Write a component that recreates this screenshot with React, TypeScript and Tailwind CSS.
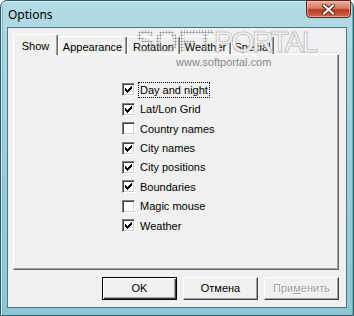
import React from "react";

const font = { fontFamily: '"Liberation Sans", Arial, sans-serif' };

const items = [
  { label: "Day and night", checked: true, focus: true },
  { label: "Lat/Lon Grid", checked: true },
  { label: "Country names", checked: false },
  { label: "City names", checked: true },
  { label: "City positions", checked: true },
  { label: "Boundaries", checked: true },
  { label: "Magic mouse", checked: false },
  { label: "Weather", checked: true },
];

function Check() {
  return (
    <svg width="7" height="7" viewBox="0 0 7 7" shapeRendering="crispEdges" className="block">
      <rect x="0" y="2" width="1" height="3" fill="#000" />
      <rect x="1" y="3" width="1" height="3" fill="#000" />
      <rect x="2" y="4" width="1" height="3" fill="#000" />
      <rect x="3" y="3" width="1" height="3" fill="#000" />
      <rect x="4" y="2" width="1" height="3" fill="#000" />
      <rect x="5" y="1" width="1" height="3" fill="#000" />
      <rect x="6" y="0" width="1" height="3" fill="#000" />
    </svg>
  );
}

function Checkbox({ checked }: { checked: boolean }) {
  return (
    <div className="w-[13px] h-[13px] shrink-0 border border-t-[#808080] border-l-[#808080] border-r-white border-b-white shadow-[inset_1px_1px_0_#404040,inset_-1px_-1px_0_#d4d0c8] bg-white flex items-center justify-center">
      {checked && <Check />}
    </div>
  );
}

function Tab({ label, w, active }: { label: string; w: string; active?: boolean }) {
  if (active) {
    return (
      <div
        className={`${w} h-[21px] -mb-[1px] relative z-10 bg-[#f0f0f0] border-l border-t border-white border-r border-r-[#696969] shadow-[inset_-1px_0_0_#a0a0a0] rounded-t-[2px] flex items-start justify-center pt-[3px] text-[11px] text-black`}
      >
        {label}
      </div>
    );
  }
  return (
    <div
      className={`${w} h-[18px] bg-[#f0f0f0] border-l border-t border-white border-r border-r-[#696969] shadow-[inset_-1px_0_0_#a0a0a0] rounded-t-[2px] flex items-start justify-center pt-[2px] text-[11px] text-black`}
    >
      {label}
    </div>
  );
}

function Button({ children, primary, disabled }: { children: React.ReactNode; primary?: boolean; disabled?: boolean }) {
  return (
    <div
      className={`w-[75px] h-[23px] flex items-center justify-center text-[11px] bg-[#f0f0f0] border ${
        primary ? "border-black shadow-[inset_1px_1px_0_#fff,inset_-1px_-1px_0_#404040,inset_-2px_-2px_0_#a0a0a0]" : "border-t-white border-l-white border-r-[#404040] border-b-[#404040] shadow-[inset_-1px_-1px_0_#a0a0a0]"
      } ${disabled ? "text-[#a0a0a0]" : "text-black"}`}
    >
      {children}
    </div>
  );
}

export default function App() {
  return (
    <div className="w-[354px] h-[316px] relative overflow-hidden bg-white" style={font}>
      <div className="w-full h-full flex flex-col rounded-t-[7px] border border-[#2f5a66] bg-[linear-gradient(180deg,#b2dce6_0%,#9fd1de_40%,#8cc6d4_100%)] shadow-[inset_1px_1px_0_#d2ecf2,inset_-1px_0_0_#6aaebe,inset_2px_0_0_#7fbccb]">
        {/* title bar */}
        <div className="h-[26px] flex items-start">
          <div className="pl-[7px] pt-[5px] text-[12px] text-black" style={{ fontFamily: '"Noto Sans", "Liberation Sans", sans-serif' }}>
            Options
          </div>
          <div className="ml-auto mr-[2px] -mt-[1px] w-[45px] h-[18px] rounded-b-[4px] border border-[#6a1f14] bg-[linear-gradient(180deg,#e6ab9c_0%,#d57d68_45%,#b83a22_55%,#cf6a4c_100%)] shadow-[inset_0_0_0_1px_rgba(255,220,210,0.5)] flex items-center justify-center">
            <svg width="13" height="11" viewBox="0 0 13 11">
              <path d="M2 1.5 L11 9.5 M11 1.5 L2 9.5" stroke="#5a2219" strokeWidth="4" strokeLinecap="square" />
              <path d="M2 1.5 L11 9.5 M11 1.5 L2 9.5" stroke="#fff" strokeWidth="2" strokeLinecap="square" />
            </svg>
          </div>
        </div>

        {/* client area */}
        <div className="mx-[6px] h-[281px] bg-[#f0f0f0] border border-[#4f7883] pl-[5px] pt-[6px]">
          <div className="flex items-end h-[20px] pl-[0px]">
            <Tab label="Show" w="w-[45px]" active />
            <Tab label="Appearance" w="w-[69px]" />
            <Tab label="Rotation" w="w-[53px]" />
            <Tab label="Weather" w="w-[51px]" />
            <Tab label="Special" w="w-[43px]" />
          </div>
          <div className="w-[326px] h-[216px] border-l border-t border-white border-r border-b border-r-[#696969] border-b-[#696969] shadow-[inset_-1px_-1px_0_#a0a0a0] pl-[108px] pt-[25px]">
            {items.map((it) => (
              <div key={it.label} className="h-[19.45px] flex items-center">
                <Checkbox checked={it.checked} />
                <span
                  className={`ml-[3px] px-[1px] leading-[14px] text-[11px] text-black border ${
                    it.focus ? "border-dotted border-black" : "border-transparent"
                  }`}
                >
                  {it.label}
                </span>
              </div>
            ))}
          </div>
          <div className="flex justify-end gap-[6px] mt-[7px] w-[326px]">
            <Button primary>OK</Button>
            <Button>Отмена</Button>
            <Button disabled>
              <span className="[text-shadow:1px_1px_0_#fff]">
                При<span className="underline">м</span>енить
              </span>
            </Button>
          </div>
        </div>
      </div>

      {/* softportal watermark */}
      <div className="absolute left-[135px] top-[25px] flex items-start pointer-events-none">
        <span className="text-[31px] leading-[34px] tracking-[-1px] font-bold text-transparent bg-clip-text bg-[radial-gradient(circle,#8c8c8c_0.9px,transparent_1.1px)] bg-size-[3px_3px]">
          SOFT
        </span>
        <span className="text-[30px] leading-[34px] tracking-[-2.5px] text-white [-webkit-text-stroke:1px_#c4c4c4]">
          PORTAL
        </span>
      </div>
      <div className="absolute left-[176px] top-[56px] text-[11px] leading-[12px] text-[#8a8a8a] pointer-events-none">
        www.softportal.com
      </div>
    </div>
  );
}
